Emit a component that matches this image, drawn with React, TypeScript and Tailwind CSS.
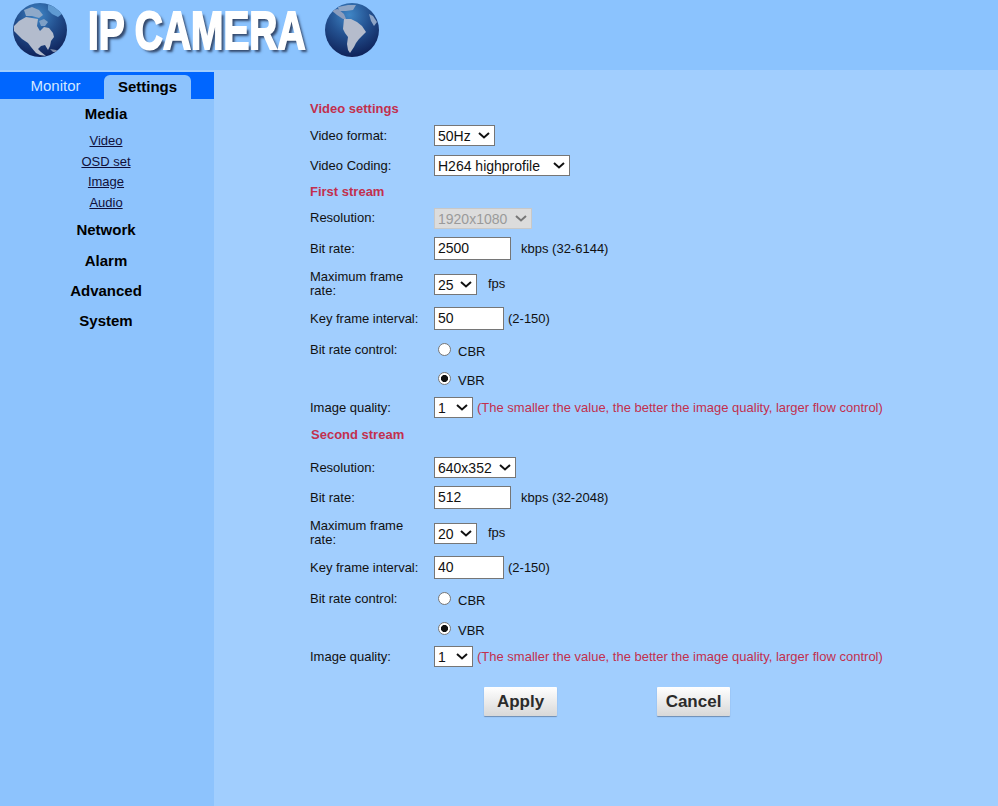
import React from "react";

const FONT = "font-['Liberation_Sans',Arial,sans-serif]";

function Row({ mt, label, flat, children }: { mt: string; label?: string; flat?: boolean; children?: React.ReactNode }) {
  return (
    <div className={`flex items-center h-[24px] ${mt}`}>
      <div className={`w-[124px] shrink-0 pr-[12px] leading-[14px] ${flat ? "" : "pt-[2px]"}`}>{label}</div>
      <div className="flex items-center">{children}</div>
    </div>
  );
}

function Heading({ mt, children, extra }: { mt: string; children: React.ReactNode; extra?: string }) {
  return (
    <div className={`flex items-center h-[24px] pt-[2px] text-[13px] font-bold text-[#c2304e] ${mt} ${extra ?? ""}`}>{children}</div>
  );
}

function Sel({ w, value, options, disabled, extra }: { w: string; value: string; options: string[]; disabled?: boolean; extra?: string }) {
  return (
    <div className={`relative ${w} h-[21px] ${extra ?? ""}`}>
      <select
        defaultValue={value}
        disabled={disabled}
        className="appearance-none block w-full h-full pl-[3px] border border-[#767676] bg-white text-[14px] text-[#111] disabled:text-[#9a9a9a] disabled:bg-[#dcdcdc] disabled:border-[#c8c8c8] disabled:opacity-100"
      >
        {options.map((o) => (
          <option key={o}>{o}</option>
        ))}
      </select>
      <svg width="12" height="7" viewBox="0 0 12 7" className="absolute right-[5px] top-[7px] pointer-events-none">
        <path d="M1 1 L6 5.5 L11 1" fill="none" stroke={disabled ? "#777" : "#111"} strokeWidth="2" />
      </svg>
    </div>
  );
}

function Num({ w, value }: { w: string; value: string }) {
  return (
    <input
      defaultValue={value}
      className={`${w} h-[23px] border border-[#767676] bg-white px-[3px] text-[14px] text-[#111]`}
    />
  );
}

function Radio({ name, checked, label }: { name: string; checked?: boolean; label: string }) {
  return (
    <label className="flex items-center">
      <input
        type="radio"
        name={name}
        defaultChecked={checked}
        className="appearance-none w-[13px] h-[13px] ml-[4px] mr-[7px] mb-[2px] rounded-full border border-[#767676] bg-white checked:bg-[radial-gradient(circle,#111_0,#111_3.2px,#fff_3.9px)]"
      />
      <span className="mt-[4px]">{label}</span>
    </label>
  );
}

function Hint() {
  return (
    <span className="ml-[4px] mt-[2px] text-[13px] text-[#c2304e] whitespace-nowrap">
      (The smaller the value, the better the image quality, larger flow control)
    </span>
  );
}

function Globe({ id, kind }: { id: string; kind: "na" | "sa" }) {
  return (
    <svg width="56" height="56" viewBox="0 0 56 56" className="shrink-0">
      <defs>
        <radialGradient id={id} cx="0.45" cy="0.22" r="0.85">
          <stop offset="0" stopColor="#3f86c6" />
          <stop offset="0.45" stopColor="#23508f" />
          <stop offset="1" stopColor="#0b1a50" />
        </radialGradient>
        <filter id={`${id}b`} x="-10%" y="-10%" width="120%" height="120%">
          <feGaussianBlur stdDeviation="0.6" />
        </filter>
        <clipPath id={`${id}c`}>
          <circle cx="28" cy="28" r="27" />
        </clipPath>
      </defs>
      <circle cx="28" cy="28" r="27" fill={`url(#${id})`} />
      <g clipPath={`url(#${id}c)`} filter={`url(#${id}b)`}>
        {kind === "na" ? (
          <>
            <path
              d="M2 24 L7 19 L14 15 L20 16 L26 17 L25 24 L28 29 L32 25 L37 26 L41 31 L42 35 L39 39 L38 44 L36 48 L33 43 L29 44 L26 47 L29 50 L34 54 L28 53 L24 51 L19 45 L16 41 L10 37 L6 33 L2 29 Z"
              fill="#b3bccd"
            />
            <path d="M12 8 L20 5 L27 8 L31 13 L27 16 L20 14 L14 14 Z" fill="#8ea9c9" />
            <path d="M36 3 L44 4 L51 11 L46 15 L40 12 L36 8 Z" fill="#5f9ad2" />
            <path d="M27 19 L32 17 L36 20 L33 24 L29 24 Z" fill="#7d9fc6" />
            <path d="M38 47 L44 48 L47 50 L41 50 Z" fill="#7f8ead" />
          </>
        ) : (
          <>
            <path d="M14 5 L24 3 L32 3 L29 8 L22 9 L15 9 Z" fill="#8fa6c6" />
            <path d="M7 8 L14 7 L20 12 L22 17 L19 17 L13 13 Z" fill="#8c9dbd" />
            <path d="M20 17 L27 17 L33 20 L38 24 L42 30 L38 34 L35 37 L32 41 L30 45 L26 51 L24 48 L23 42 L24 35 L21 31 L19 27 Z" fill="#b5bccc" />
            <path d="M45 12 L49 14 L53 20 L50 24 L47 19 Z" fill="#8fa5c6" />
          </>
        )}
      </g>
    </svg>
  );
}

export default function App() {
  const navBig = "h-[30px] flex items-center justify-center text-[15px] font-bold text-black";
  const link = "h-[20.5px] flex items-center justify-center text-[13px] underline text-[#10103a]";
  return (
    <div className={`h-[806px] flex flex-col overflow-hidden bg-[#a1cefe] ${FONT} text-[13px] text-[#111]`}>
      <header className="h-[70px] shrink-0 bg-[#8bc3fe] flex items-start pt-[2px] pl-[12px]">
        <Globe id="g1" kind="na" />
        <div className="w-[256px] h-[56px] ml-[20px] shrink-0">
          <div className="origin-left scale-x-[0.72] w-max text-[54px] leading-[56px] font-bold text-white whitespace-nowrap [-webkit-text-stroke:2px_white] [text-shadow:4px_3px_3px_#33486b]">
            IP CAMERA
          </div>
        </div>
        <div className="-ml-[20px]">
          <Globe id="g2" kind="sa" />
        </div>
      </header>
      <div className="flex-1 flex min-h-0">
        <aside className="w-[214px] shrink-0 flex flex-col">
          <div className="h-[2px] bg-[#a1cefe]" />
          <div className="flex-1 bg-[#8dc3fd]">
            <nav className="h-[27px] bg-[#0066ff] flex items-end text-[15px]">
              <a className="w-[104px] h-full flex items-center justify-center pl-[7px] pt-[2px] text-[#d2e8ff]">Monitor</a>
              <a className="w-[87px] h-[24px] rounded-t-[6px] bg-[#8dc3fd] flex items-center justify-center font-bold text-black">Settings</a>
            </nav>
            <div className="pr-[2px]">
              <div className="h-[30px] flex items-center justify-center text-[15px] font-bold text-black">Media</div>
              <div className="mt-[1.5px] flex flex-col">
                <a className={link}>Video</a>
                <a className={link}>OSD set</a>
                <a className={link}>Image</a>
                <a className={link}>Audio</a>
              </div>
              <div className="mt-[2.5px] flex flex-col">
                <div className={navBig}>Network</div>
                <div className={`${navBig} mt-[1px]`}>Alarm</div>
                <div className={navBig}>Advanced</div>
                <div className={navBig}>System</div>
              </div>
            </div>
          </div>
        </aside>
        <main className="flex-1 pl-[96px] pt-[26px]">
          <Heading mt="mt-0">Video settings</Heading>
          <Row mt="mt-[3px]" label="Video format:"><Sel w="w-[61px]" value="50Hz" options={["50Hz", "60Hz"]} /></Row>
          <Row mt="mt-[6px]" label="Video Coding:"><Sel w="w-[136px]" value="H264 highprofile" options={["H264 highprofile", "H264 mainprofile", "H264 baseline"]} /></Row>
          <Heading mt="mt-[2px]">First stream</Heading>
          <Row mt="mt-[3px]" flat label="Resolution:"><Sel w="w-[98px]" value="1920x1080" options={["1920x1080"]} disabled /></Row>
          <Row mt="mt-[6px]" label="Bit rate:"><Num w="w-[77px]" value="2500" /><span className="ml-[10px] mt-[2px]">kbps (32-6144)</span></Row>
          <Row mt="mt-[11px]" label="Maximum frame rate:"><Sel w="w-[43px]" value="25" options={["25", "20", "15"]} extra="mt-[2px]" /><span className="ml-[11px] mt-[2px]">fps</span></Row>
          <Row mt="mt-[11px]" label="Key frame interval:"><Num w="w-[70px]" value="50" /><span className="ml-[4px] mt-[2px]">(2-150)</span></Row>
          <Row mt="mt-[8px]" flat label="Bit rate control:"><Radio name="r1" label="CBR" /></Row>
          <Row mt="mt-[5px]"><Radio name="r1" label="VBR" checked /></Row>
          <Row mt="mt-[4px]" label="Image quality:"><Sel w="w-[39px]" value="1" options={["1", "2", "3"]} /><Hint /></Row>
          <Heading mt="mt-[3px]" extra="pl-[1px]">Second stream</Heading>
          <Row mt="mt-[9px]" label="Resolution:"><Sel w="w-[82px]" value="640x352" options={["640x352", "320x176"]} /></Row>
          <Row mt="mt-[6px]" label="Bit rate:"><Num w="w-[77px]" value="512" /><span className="ml-[10px] mt-[2px]">kbps (32-2048)</span></Row>
          <Row mt="mt-[11px]" label="Maximum frame rate:"><Sel w="w-[43px]" value="20" options={["25", "20", "15"]} extra="mt-[2px]" /><span className="ml-[11px] mt-[2px]">fps</span></Row>
          <Row mt="mt-[11px]" label="Key frame interval:"><Num w="w-[70px]" value="40" /><span className="ml-[4px] mt-[2px]">(2-150)</span></Row>
          <Row mt="mt-[8px]" flat label="Bit rate control:"><Radio name="r2" label="CBR" /></Row>
          <Row mt="mt-[6px]"><Radio name="r2" label="VBR" checked /></Row>
          <Row mt="mt-[3px]" label="Image quality:"><Sel w="w-[39px]" value="1" options={["1", "2", "3"]} /><Hint /></Row>
          <div className="mt-[19px] flex pl-[174px] gap-[100px]">
            <button className="w-[73px] h-[29px] rounded-[1px] bg-gradient-to-b from-white to-[#d8d8d8] shadow-[0_1px_1px_#6d8db3] text-[17px] font-bold text-[#2b2b2b]">Apply</button>
            <button className="w-[73px] h-[29px] rounded-[1px] bg-gradient-to-b from-white to-[#d8d8d8] shadow-[0_1px_1px_#6d8db3] text-[17px] font-bold text-[#2b2b2b]">Cancel</button>
          </div>
        </main>
      </div>
    </div>
  );
}
